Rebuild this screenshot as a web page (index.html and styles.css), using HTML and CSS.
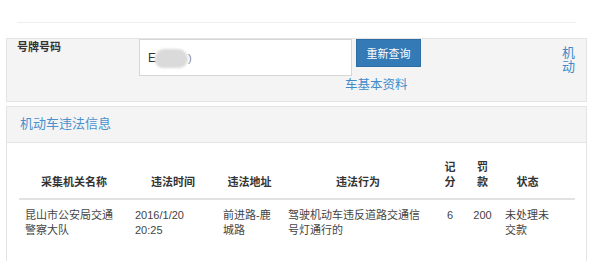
FILE: index.html
```html
<!DOCTYPE html>
<html lang="zh-CN">
<head>
    <meta charset="UTF-8">
    <meta name="viewport" content="width=device-width, initial-scale=1.0">
    <title>机动车违法信息</title>
    <link rel="stylesheet" href="styles.css">
</head>
<body>
    <div class="page">
        <div class="top-rule-wrap"><hr class="top-rule"></div>

        <section class="search-panel">
            <label class="plate-label">号牌号码</label>
            <div class="plate-input">
                <span class="plate-text">E</span><span class="plate-mask"></span><span class="plate-tail">)</span>
            </div>
            <div class="actions">
                <button class="btn-primary">重新查询</button>
                <a class="info-link" href="#">车基本资料</a>
            </div>
            <a class="side-link" href="#">机动</a>
        </section>

        <section class="panel">
            <div class="panel-heading">机动车违法信息</div>
            <div class="panel-body">
                <table class="violations">
                    <thead>
                        <tr>
                            <th class="c-org">采集机关名称</th>
                            <th class="c-time">违法时间</th>
                            <th class="c-addr">违法地址</th>
                            <th class="c-act">违法行为</th>
                            <th class="c-pts num">记分</th>
                            <th class="c-fine num">罚款</th>
                            <th class="c-state">状态</th>
                            <th class="c-rest"></th>
                        </tr>
                    </thead>
                    <tbody>
                        <tr>
                            <td>昆山市公安局交通警察大队</td>
                            <td>2016/1/20 20:25</td>
                            <td>前进路-鹿城路</td>
                            <td>驾驶机动车违反道路交通信号灯通行的</td>
                            <td class="num">6</td>
                            <td class="num">200</td>
                            <td>未处理未交款</td>
                            <td></td>
                        </tr>
                    </tbody>
                </table>
            </div>
        </section>
    </div>
</body>
</html>
```

FILE: styles.css
```css
* { margin: 0; padding: 0; box-sizing: border-box; }
body { font-family: "Liberation Sans", "Noto Sans CJK SC", sans-serif; color: #333; background: #fff; }
a { color: #428bca; text-decoration: none; }

.page { width: 581px; margin-left: 6px; }

.top-rule-wrap { padding: 22px 12px 0; height: 38px; }
.top-rule { border: none; border-top: 1px solid #eee; margin: 0 -1px 0 -1px; }

/* search box */
.search-panel { display: flex; align-items: flex-start; height: 64px; background: #f4f4f4; border: 1px solid #e4e4e4; padding: 0 11px 0 10px; }
.plate-label { width: 122px; font-size: 11px; font-weight: bold; line-height: 16px; }
.plate-input { width: 213px; height: 37px; background: #fff; border: 1px solid #d6d6d6; display: flex; align-items: center; padding-left: 8px; font-size: 12px; color: #333; }
.plate-text { line-height: 14px; }
.plate-mask { display: inline-block; width: 33px; height: 19px; margin: 2px 0 0 -1px; background: #dadada; border-radius: 9px 10px 9px 8px; filter: blur(1.2px); }
.plate-tail { color: #888; font-size: 11px; margin-left: 0; }
.actions { margin-left: 4px; display: flex; flex-direction: column; align-items: flex-start; }
.btn-primary { width: 65px; height: 28px; background: #337ab7; border: 1px solid #2e6da4; color: #fff; font-size: 11px; font-family: inherit; }
.info-link { margin: 10px 0 0 -11px; font-size: 12.5px; line-height: 16px; }
.side-link { margin-left: auto; margin-top: 7px; width: 13px; font-size: 13px; line-height: 14px; word-break: break-all; }

/* violations panel */
.panel { margin-top: 4px; border: 1px solid #e4e4e4; border-bottom: none; height: 155px; }
.panel-heading { background: #f4f4f4; border-bottom: 1px solid #e4e4e4; padding: 8px 13px 9px; font-size: 13px; line-height: 18px; color: #4a90cc; }
.panel-body { padding: 9px 11px 0 12px; }

.violations { border-collapse: collapse; table-layout: fixed; width: 556px; font-size: 11px; line-height: 15px; }
.violations th { padding: 8px 6px; font-weight: bold; text-align: center; vertical-align: bottom; border-bottom: 2px solid #e2e2e2; }
.violations td { padding: 8px 6px; text-align: left; vertical-align: top; color: #444; }
.violations td.num { text-align: center; }
.c-org { width: 110px; }
.c-time { width: 88px; }
.c-addr { width: 65px; }
.c-act { width: 152px; }
.c-pts { width: 32px; }
.c-fine { width: 33px; }
.c-state { width: 57px; }
.c-rest { width: 19px; }
```
